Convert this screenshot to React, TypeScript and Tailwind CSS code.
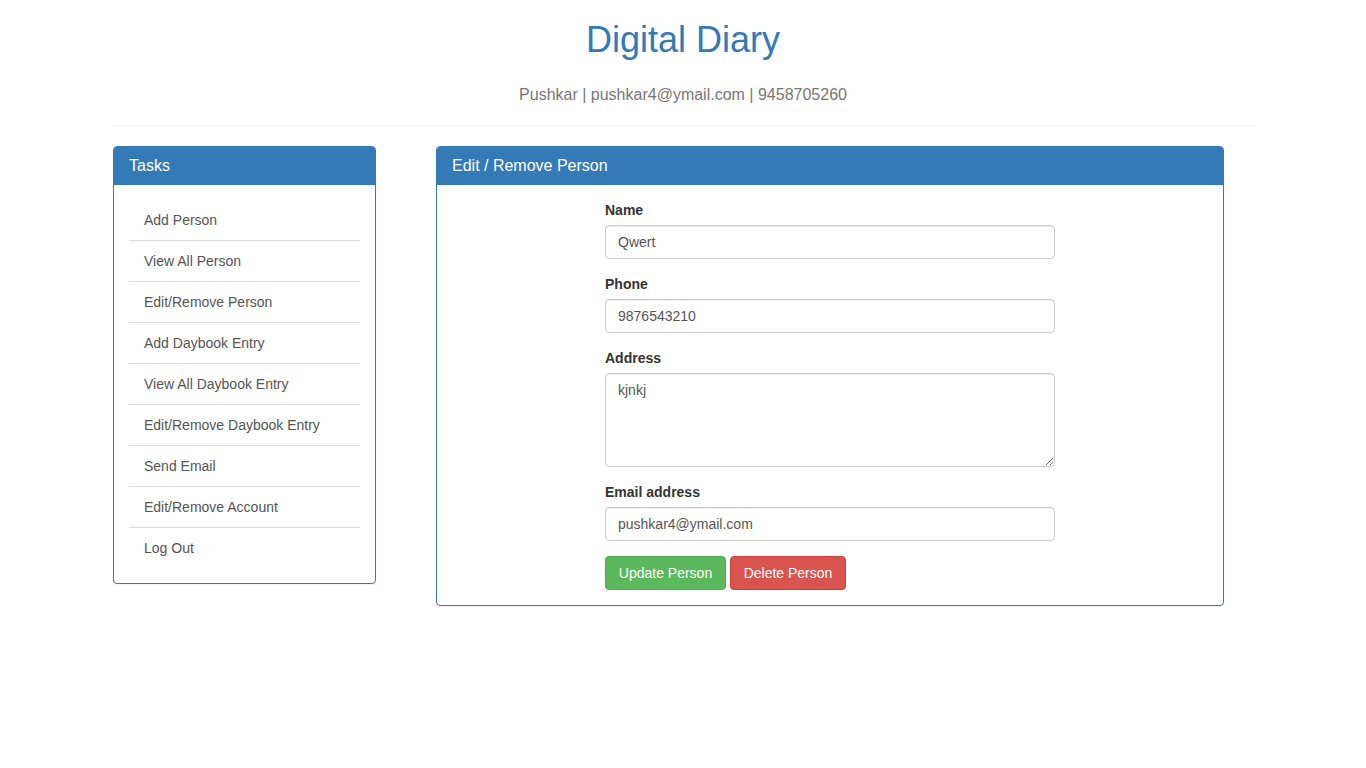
import React, { useState } from "react";

const tasks = [
  "Add Person",
  "View All Person",
  "Edit/Remove Person",
  "Add Daybook Entry",
  "View All Daybook Entry",
  "Edit/Remove Daybook Entry",
  "Send Email",
  "Edit/Remove Account",
  "Log Out",
];

const inputCls =
  "block w-full h-[34px] px-3 py-[6px] text-[14px] leading-[20px] text-[#555] bg-white border border-[#ccc] rounded-[4px] shadow-[inset_0_1px_1px_rgba(0,0,0,0.075)] outline-none";

const Panel: React.FC<{ title: string; className?: string; children: React.ReactNode }> = ({
  title,
  className,
  children,
}) => (
  <div
    className={`border border-[#337ab7] rounded-[4px] bg-white shadow-[0_1px_1px_rgba(0,0,0,0.05)] ${className ?? ""}`}
  >
    <div className="bg-[#337ab7] text-white px-[15px] py-[10px] rounded-t-[3px] border-b border-[#337ab7]">
      <h3 className="text-[16px] leading-[1.1] font-normal">{title}</h3>
    </div>
    <div className="p-[15px]">{children}</div>
  </div>
);

export default function App() {
  const [name, setName] = useState("Qwert");
  const [phone, setPhone] = useState("9876543210");
  const [address, setAddress] = useState("kjnkj");
  const [email, setEmail] = useState("pushkar4@ymail.com");

  return (
    <div className="min-h-screen bg-white text-[#333] text-[14px] leading-[20px] font-['Liberation_Sans',Arial,sans-serif]">
      <div className="w-[1140px] mx-auto">
        {/* Header */}
        <h1 className="text-center text-[36px] leading-[1.1] text-[#337ab7] font-normal pt-[20px] mb-[10px]">
          Digital Diary
        </h1>
        <p className="text-center text-[16px] leading-[22px] text-[#777] mt-[24px]">
          Pushkar | pushkar4@ymail.com | 9458705260
        </p>
        <hr className="border-0 border-t border-[#eee] mt-[19px] mb-[20px]" />

        <div className="flex items-start gap-[60px]">
          {/* Sidebar */}
          <Panel title="Tasks" className="w-[263px]">
            <ul>
              {tasks.map((t, i) => (
                <li
                  key={t}
                  className={`px-[15px] flex items-center text-[#555] ${
                    i < tasks.length - 1 ? "h-[41px] border-b border-[#ddd]" : "h-[40px]"
                  }`}
                >
                  <a href="#" className="text-[#555]">
                    {t}
                  </a>
                </li>
              ))}
            </ul>
          </Panel>

          {/* Main */}
          <Panel title="Edit / Remove Person" className="w-[788px]">
            <form className="w-[450px] mx-auto" onSubmit={(e) => e.preventDefault()}>
              <div className="mb-[15px]">
                <label className="block font-bold mb-[5px]">Name</label>
                <input className={inputCls} value={name} onChange={(e) => setName(e.target.value)} />
              </div>
              <div className="mb-[15px]">
                <label className="block font-bold mb-[5px]">Phone</label>
                <input className={inputCls} value={phone} onChange={(e) => setPhone(e.target.value)} />
              </div>
              <div className="mb-[15px]">
                <label className="block font-bold mb-[5px]">Address</label>
                <textarea
                  rows={4}
                  className="block w-full h-[94px] px-3 py-[6px] text-[14px] leading-[20px] text-[#555] bg-white border border-[#ccc] rounded-[4px] shadow-[inset_0_1px_1px_rgba(0,0,0,0.075)] outline-none"
                  value={address}
                  onChange={(e) => setAddress(e.target.value)}
                />
              </div>
              <div className="mb-[15px]">
                <label className="block font-bold mb-[5px]">Email address</label>
                <input className={inputCls} value={email} onChange={(e) => setEmail(e.target.value)} />
              </div>
              <div className="flex gap-[4px]">
                <button
                  type="submit"
                  className="w-[121px] h-[34px] text-[14px] text-white bg-[#5cb85c] border border-[#4cae4c] rounded-[4px]"
                >
                  Update Person
                </button>
                <button
                  type="button"
                  className="w-[116px] h-[34px] text-[14px] text-white bg-[#d9534f] border border-[#d43f3a] rounded-[4px]"
                >
                  Delete Person
                </button>
              </div>
            </form>
          </Panel>
        </div>
      </div>
    </div>
  );
}
